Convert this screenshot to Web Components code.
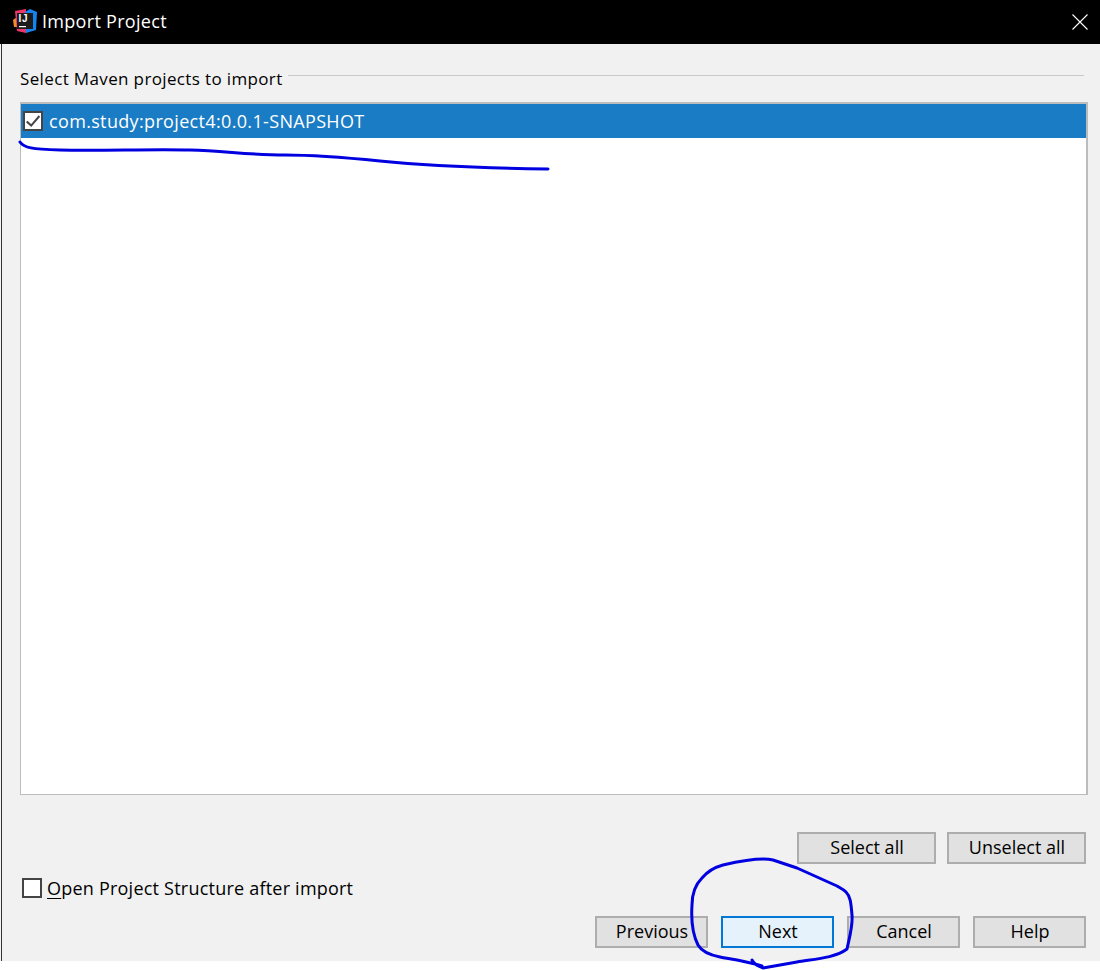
<!DOCTYPE html>
<html>
<head>
<meta charset="utf-8">
<title>Import Project</title>
<style>
  html, body { margin: 0; background: #fff; }
  body { font-family: "Open Sans", "Noto Sans", sans-serif; font-size: 18px; color: #000; }
</style>
</head>
<body>
<import-dialog>
  <title-bar slot="title">Import Project</title-bar>
  <titled-rule>Select Maven projects to import</titled-rule>
  <project-list>
    <project-row checked>com.study:project4:0.0.1-SNAPSHOT</project-row>
  </project-list>
  <button-row>
    <dialog-button wide>Select all</dialog-button>
    <dialog-button wide>Unselect all</dialog-button>
  </button-row>
  <option-row><span style="text-decoration: underline; text-underline-offset: 3px">O</span>pen Project Structure after import</option-row>
  <button-row nav>
    <dialog-button>Previous</dialog-button>
    <dialog-button primary>Next</dialog-button>
    <dialog-button>Cancel</dialog-button>
    <dialog-button>Help</dialog-button>
  </button-row>
</import-dialog>
<ink-marks></ink-marks>

<script>
  class ImportDialog extends HTMLElement {
    constructor() {
      super();
      this.attachShadow({ mode: 'open' });
      this.shadowRoot.innerHTML = `
        <style>
          :host { display: block; width: 1100px; height: 961px; box-sizing: border-box; background: #f1f1f1; border-left: 1px solid #f4f4f4; }
          .edge { height: 100%; box-sizing: border-box; border-left: 1px solid #333; display: flex; flex-direction: column; }
          .body { flex: 1; display: flex; flex-direction: column; padding: 0 14px 13px 18px; }
        </style>
        <div class="edge">
          <slot name="title"></slot>
          <div class="body"><slot></slot></div>
        </div>
      `;
    }
  }

  class TitleBar extends HTMLElement {
    constructor() {
      super();
      this.attachShadow({ mode: 'open' });
      this.shadowRoot.innerHTML = `
        <style>
          :host { display: flex; align-items: center; height: 44px; background: #000; color: #fff; margin-left: -2px; padding-left: 13px; padding-right: 12px; font-size: 18px; letter-spacing: .3px; }
          .logo { width: 24px; height: 24px; margin: -2px 5px 0 0; flex: none; }
          .text { flex: 1; padding-bottom: 2px; }
          .close { width: 16px; height: 16px; flex: none; }
        </style>
        <svg class="logo" viewBox="0 0 24 24">
          <path d="M0 11 L4 8 L4 18 L1 18 Z" fill="#f58a2a"/>
          <path d="M2 2 L13 0 L13 24 L4 22 Z" fill="#f0356b"/>
          <path d="M12 3 L17 0 L24 3 L23 21 L13 24 Z" fill="#1484f0"/>
          <rect x="4" y="4" width="16" height="16" fill="#1c1c1c"/>
          <text x="5.5" y="13" font-family="Liberation Sans, sans-serif" font-size="10" font-weight="700" letter-spacing=".8" fill="#fff">IJ</text>
          <rect x="6" y="17" width="7" height="1.2" fill="#fff"/>
        </svg>
        <span class="text"><slot></slot></span>
        <svg class="close" viewBox="0 0 16 16"><path d="M.5.5l15 15M15.5.5l-15 15" stroke="#fff" stroke-width="1.1" fill="none"/></svg>
      `;
    }
  }

  class TitledRule extends HTMLElement {
    constructor() {
      super();
      this.attachShadow({ mode: 'open' });
      this.shadowRoot.innerHTML = `
        <style>
          :host { display: flex; align-items: center; gap: 5px; height: 24px; margin-top: 23px; padding-right: 2px; font-size: 17px; letter-spacing: .36px; }
          .label { padding-bottom: 2px; }
          .line { flex: 1; height: 1px; background: #c8c8c8; margin-top: -8px; }
        </style>
        <span class="label"><slot></slot></span><span class="line"></span>
      `;
    }
  }

  class ProjectList extends HTMLElement {
    constructor() {
      super();
      this.attachShadow({ mode: 'open' });
      this.shadowRoot.innerHTML = `
        <style>
          :host { display: block; height: 693px; box-sizing: border-box; margin-top: 11px; margin-right: -2px; background: #fff; border: 1px solid #bcbcbc; border-top-width: 2px; border-right-width: 2px; }
        </style>
        <slot></slot>
      `;
    }
  }

  class CheckBox extends HTMLElement {
    constructor() {
      super();
      this.attachShadow({ mode: 'open' });
      this.shadowRoot.innerHTML = `
        <style>
          :host { display: block; width: 20px; height: 20px; box-sizing: border-box; background: #fff; border: 2px solid #444; flex: none; }
          svg { display: block; width: 16px; height: 16px; }
        </style>
        ${this.hasAttribute('checked') ? '<svg viewBox="0 0 16 16"><path d="M1.7 8.4L6.2 12.6L14.4 3" stroke="#444" stroke-width="2" fill="none"/></svg>' : ''}
      `;
    }
  }

  class ProjectRow extends HTMLElement {
    constructor() {
      super();
      this.attachShadow({ mode: 'open' });
      this.shadowRoot.innerHTML = `
        <style>
          :host { display: flex; align-items: center; gap: 6px; height: 34px; padding-left: 2px; background: #1a7cc4; color: #fff; font-size: 18px; letter-spacing: .34px; }
        </style>
        <check-box ${this.hasAttribute('checked') ? 'checked' : ''}></check-box>
        <span><slot></slot></span>
      `;
    }
  }

  class OptionRow extends HTMLElement {
    constructor() {
      super();
      this.attachShadow({ mode: 'open' });
      this.shadowRoot.innerHTML = `
        <style>
          :host { display: flex; align-items: center; gap: 5px; height: 20px; margin-top: 14px; padding-left: 2px; font-size: 18px; letter-spacing: .22px; }
        </style>
        <check-box></check-box>
        <span><slot></slot></span>
      `;
    }
  }

  class ButtonRow extends HTMLElement {
    constructor() {
      super();
      this.attachShadow({ mode: 'open' });
      const nav = this.hasAttribute('nav');
      this.shadowRoot.innerHTML = `
        <style>
          :host { display: flex; justify-content: flex-end; gap: ${nav ? 13 : 11}px; margin-top: ${nav ? 18 : 37}px; }
        </style>
        <slot></slot>
      `;
    }
  }

  class DialogButton extends HTMLElement {
    constructor() {
      super();
      this.attachShadow({ mode: 'open' });
      this.shadowRoot.innerHTML = `
        <style>
          :host { display: flex; align-items: center; justify-content: center; box-sizing: border-box; width: 113px; height: 32px; padding: 0 0 2px 1px; background: #e1e1e1; border: 2px solid #adadad; font-size: 18px; }
          :host([wide]) { width: 139px; }
          :host([primary]) { background: #e5f1fb; border-color: #0078d7; }
        </style>
        <slot></slot>
      `;
    }
  }

  // hand-drawn annotations lying over the dialog
  class InkMarks extends HTMLElement {
    constructor() {
      super();
      this.attachShadow({ mode: 'open' });
      this.shadowRoot.innerHTML = `
        <style>
          :host { position: absolute; left: 0; top: 0; width: 1100px; height: 970px; pointer-events: none; }
          svg { display: block; }
          path { fill: none; stroke: #0000e0; stroke-width: 3; stroke-linecap: round; stroke-linejoin: round; }
        </style>
        <svg width="1100" height="970" viewBox="0 0 1100 970">
          <path d="M20 142 C24 148 32 149 60 150 C100 151 150 149 190 150 C225 151 250 155 285 155 C320 155 350 158 380 161 C420 165 480 168 548 169"/>
          <path d="M752 960 C755 966 760 966 763 968 L797 962 C815 959 835 958 847 949 C850 935 853 925 852 915 C851 905 851 897 846 892 C843 889 840 888 837 886 L797 868 L773 860 C765 858 745 860 723 865 C712 868 707 872 702 878 C695 885 692 893 692 905 C691 920 693 935 698 945 C702 952 710 955 720 957 C730 959 745 961 762 966"/>
        </svg>
      `;
    }
  }

  customElements.define('import-dialog', ImportDialog);
  customElements.define('title-bar', TitleBar);
  customElements.define('titled-rule', TitledRule);
  customElements.define('project-list', ProjectList);
  customElements.define('check-box', CheckBox);
  customElements.define('project-row', ProjectRow);
  customElements.define('option-row', OptionRow);
  customElements.define('button-row', ButtonRow);
  customElements.define('dialog-button', DialogButton);
  customElements.define('ink-marks', InkMarks);
</script>
</body>
</html>
